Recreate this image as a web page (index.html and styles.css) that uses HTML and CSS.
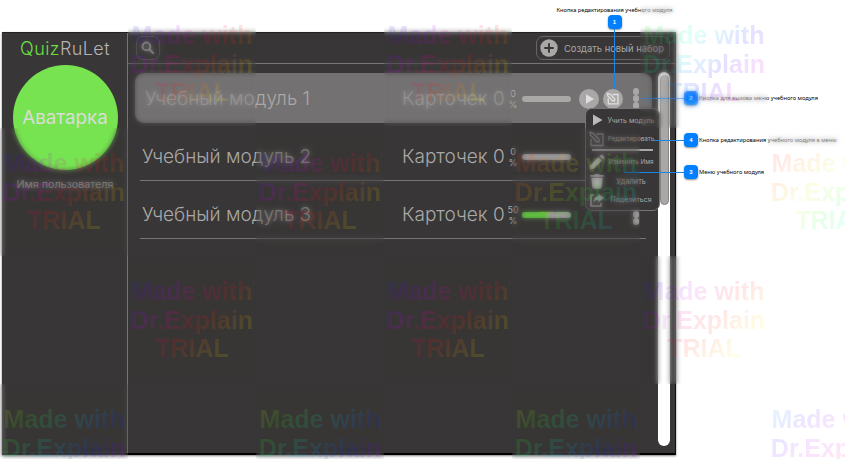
FILE: index.html
```
<!DOCTYPE html>
<html lang="ru">
<head>
<meta charset="utf-8">
<title>QuizRuLet</title>
<link rel="stylesheet" href="styles.css">
</head>
<body>
<div class="app">
  <aside class="sidebar">
    <div class="logo"><span class="green">Quiz</span>RuLet</div>
    <div class="avatar">Аватарка</div>
    <div class="username">Имя пользователя</div>
  </aside>
  <main class="main">
    <header class="header">
      <div class="search"><svg width="14" height="14" viewBox="0 0 14 14" fill="none" stroke="#aaa8a7" stroke-width="2"><circle cx="5.4" cy="5.4" r="3.9"/><path d="M8.3 8.3 12.8 12.8"/></svg></div>
      <div class="create"><svg width="18" height="18" viewBox="0 0 18 18"><circle cx="9" cy="9" r="8.7" fill="#aaa8a7"/><path d="M9 5v8M5 9h8" stroke="#383636" stroke-width="1.9" stroke-linecap="round"/></svg><span>Создать новый набор</span></div>
    </header>
    <div class="content">
      <div class="list">
        <section class="row active">
          <div class="title">Учебный модуль 1</div><div class="cards">Карточек 0</div>
          <div class="pct">0<br>%</div><div class="bar"></div>
          <div class="actions">
            <svg width="20" height="20" viewBox="0 0 20 20"><circle cx="10" cy="10" r="10" fill="#aaa8a7"/><path d="M7 5.2v9.6l8-4.8z" fill="#e0dfdf"/></svg>
            <svg width="20" height="20" viewBox="0 0 20 20"><circle cx="10" cy="10" r="10" fill="#aaa8a7"/><g fill="none" stroke="#e0dfdf" stroke-width="1.3"><path d="M9.5 5.5H15v9.3H5.3V9.5"/><path d="m4.3 4.3 2.8.7 4.6 5-.2 2-2-.2-4.6-4.8z"/></g></svg>
          </div>
          <div class="dots"><i></i><i></i><i></i></div>
        </section>
        <section class="row">
          <div class="title">Учебный модуль 2</div><div class="cards">Карточек 0</div>
          <div class="pct">0<br>%</div><div class="bar"></div>
          <div class="actions"></div><div class="dots"><i></i><i></i><i></i></div>
        </section>
        <section class="row">
          <div class="title">Учебный модуль 3</div><div class="cards">Карточек 0</div>
          <div class="pct">50<br>%</div><div class="bar"><b style="width:50%"></b></div>
          <div class="actions"></div><div class="dots"><i></i><i></i><i></i></div>
        </section>
      </div>
      <div class="track"><div class="thumb"></div></div>
    </div>
  </main>
</div>

<nav class="menu">
  <div class="item learn"><svg width="16" height="16" viewBox="0 0 16 16"><path d="M4 2.5v11l9.5-5.5z" fill="#bbb9b9"/></svg><span>Учить модуль</span></div>
  <div class="item edit"><svg width="16" height="16" viewBox="0 0 16 16" fill="none" stroke="#8e8c8b" stroke-width="1.3"><path d="M7.5 3H14v11.5H2V8"/><path d="m1 1.2 3 .8 6 6.2v2.6H7.6L1.5 4.3z"/></svg><span>Редактировать</span></div>
  <hr>
  <div class="item rename"><svg width="16" height="16" viewBox="0 0 16 16" fill="#aaa8a7"><path d="M1 15v-3.6L9.5 3 13 6.4 4.5 15zM10.3 2.2 12 .7q.8-.6 1.5 0l1.8 1.8q.7.8 0 1.5l-1.5 1.6z"/></svg><span>Изменить Имя</span></div>
  <div class="item remove"><svg width="16" height="16" viewBox="0 0 16 16" fill="#aaa8a7"><path d="M1.2 2h4l1-1h3.6l1 1h4v1.8H1.2zM2.2 4.7h11.6l-1.2 9.6q-.2 1.4-1.4 1.4H4.8q-1.2 0-1.4-1.4z"/></svg><span>Удалить</span></div>
  <div class="item share"><svg width="16" height="16" viewBox="0 0 16 16"><path d="M5 3H2v11h10v-3" fill="none" stroke="#aaa8a7" stroke-width="1.6"/><path d="M9.5 1.8 15 6l-5.5 4.2V7.8Q6 7.7 4.4 11 4.5 4.7 9.5 4.3z" fill="#aaa8a7"/></svg><span>Поделиться</span></div>
</nav>

<div class="callout c1"><span class="label">Кнопка редактирования учебного модуля</span><span class="badge">1</span><span class="stem"></span></div>
<div class="callout side c2"><span class="stem"></span><span class="badge">2</span><span class="label">Кнопка для вызова меню учебного модуля</span></div>
<div class="callout side c4"><span class="stem"></span><span class="badge">4</span><span class="label">Кнопка редактирования учебного модуля в меню</span></div>
<div class="callout side c3"><span class="stem"></span><span class="badge">3</span><span class="label">Меню учебного модуля</span></div>

<div class="marks">
  <div></div><div class="mark blue"><p>Made with<br>Dr.Explain<br>TRIAL</p></div><div></div><div class="mark blue"><p>Made with<br>Dr.Explain<br>TRIAL</p></div><div></div><div class="mark lime"><p>Made with<br>Dr.Explain<br>TRIAL</p></div><div></div>
  <div class="mark blue"><p>Made with<br>Dr.Explain<br>TRIAL</p></div><div></div><div class="mark blue"><p>Made with<br>Dr.Explain<br>TRIAL</p></div><div></div><div class="mark red"><p>Made with<br>Dr.Explain<br>TRIAL</p></div><div></div><div class="mark red pale"><p>Made with<br>Dr.Explain<br>TRIAL</p></div>
  <div></div><div class="mark blue"><p>Made with<br>Dr.Explain<br>TRIAL</p></div><div></div><div class="mark blue"><p>Made with<br>Dr.Explain<br>TRIAL</p></div><div></div><div class="mark blue pale"><p>Made with<br>Dr.Explain<br>TRIAL</p></div><div></div>
  <div class="mark olive"><p>Made with<br>Dr.Explain<br>TRIAL</p></div><div></div><div class="mark olive"><p>Made with<br>Dr.Explain<br>TRIAL</p></div><div></div><div class="mark olive"><p>Made with<br>Dr.Explain<br>TRIAL</p></div><div></div><div class="mark azure pale"><p>Made with<br>Dr.Explain<br>TRIAL</p></div>
</div>
</body>
</html>
```
FILE: styles.css
```
* { box-sizing: border-box; }
html { overflow: hidden; }
body { margin: 0; width: 845px; height: 459px; overflow: hidden; position: relative; background: #fff; font-family: Inter, "Noto Sans", sans-serif; color: #aaa8a7; }
.app { display: flex; width: 674px; height: 423px; margin: 32px 0 0 2px; background: #383636; border-right: 1px solid #111; border-bottom: 2px solid #000; border-top: 1px solid #222; box-shadow: 0 1px 2px rgba(0,0,0,.5); }
.sidebar { width: 126px; padding-left: 1px; border-right: 1px solid #777575; display: flex; flex-direction: column; align-items: center; }
.logo { font-size: 18px; font-weight: 300; line-height: 24px; margin-top: 4px; letter-spacing: .4px; color: #b5b3b2; }
.green { color: #69e044; }
.avatar { width: 105px; height: 105px; border-radius: 50%; margin-top: 4px; background: #77e350; color: #d9dcd7; display: flex; align-items: center; justify-content: center; font-size: 18.8px; white-space: nowrap; }
.username { margin-top: 8px; font-size: 10.7px; line-height: 14px; white-space: nowrap; }
.main { flex: 1; display: flex; flex-direction: column; min-width: 0; }
.header { height: 32px; border-bottom: 1px solid #777575; display: flex; justify-content: space-between; align-items: center; padding: 0 5px 0 8px; }
.search { width: 24px; height: 24px; border: 1px solid #686665; border-radius: 7px; display: flex; align-items: center; justify-content: center; }
.create { width: 134px; height: 24px; border: 1px solid #686665; border-radius: 7px; display: flex; align-items: center; padding-left: 3px; gap: 6px; font-size: 9.4px; white-space: nowrap; }
.create svg { flex: none; }
.content { flex: 1; display: flex; padding: 8px 5px 7px 7px; }
.list { width: 517px; padding-top: 1px; display: flex; flex-direction: column; }
.row { height: 58px; margin: 0 6px 0 5px; padding: 10px 0 0 2px; display: flex; align-items: center; border-bottom: 1px solid #777575; }
.row.active { height: 50px; margin: 0; padding: 1px 0 0 10px; border: 0; border-radius: 9px; background: #737171; }
.title { width: 260px; font-size: 19px; font-weight: 300; white-space: nowrap; }
.row.active .title { width: 257px; }
.cards { width: 105px; font-size: 19px; font-weight: 300; white-space: nowrap; }
.pct { width: 12px; margin-right: 3px; text-align: center; font-size: 9px; line-height: 11px; display: flex; justify-content: center; }
.bar { width: 49px; height: 6px; border-radius: 3px; background: #aaa8a7; overflow: hidden; }
.bar b { display: block; height: 100%; background: #66d443; }
.actions { display: flex; width: 52px; padding-left: 8px; gap: 4px; margin-right: 10px; }
.dots { display: flex; flex-direction: column; gap: .6px; }
.dots i { width: 6.4px; height: 6.4px; border-radius: 50%; background: #aaa8a7; }
.track { width: 12px; height: 374px; margin-left: auto; padding: 3px 1.5px; border-radius: 6px; background: #fff; }
.thumb { height: 130px; border-radius: 5px; background: #aaa8a7; border: 1px solid #858382; }
.menu { position: absolute; left: 585px; top: 108px; width: 75px; height: 103px; border: 1px solid #777575; border-radius: 7px; background: #383636; padding: 2px 0 0 3px; }
.item { height: 18.6px; display: grid; grid-template-columns: 17px 50px; align-items: center; font-size: 7px; white-space: nowrap; text-align: center; }
.item.edit, .item.rename { font-size: 6.3px; }
.item.remove { font-size: 7.4px; }
.menu hr { width: 61px; height: 2px; margin: 1px 0 2px 3px; border: 0; background: #aaa8a7; }
.callout { position: absolute; color: #000; display: flex; align-items: center; white-space: nowrap; }
.label { font-family: "Noto Sans", sans-serif; font-size: 5.7px; }
.badge { flex: none; width: 14px; height: 14px; border-radius: 4px; background: #0080ff; color: #fff; font: bold 6px/14px "Liberation Sans", sans-serif; text-align: center; box-shadow: 0 1px 2px rgba(0,0,0,.45); }
.stem { flex: 1; background: #1a84e8; }
.c1 { left: 550px; top: 5px; width: 129px; height: 84px; flex-direction: column; }
.c1 .label { line-height: 10px; }
.c1 .stem { width: 1px; }
.side { height: 14px; }
.side .stem { height: 1px; }
.side .label { width: 146px; padding-left: 1px; }
.c2 { left: 642px; top: 91px; width: 202px; }
.c4 { left: 654px; top: 133px; width: 190px; }
.c3 { left: 624px; top: 165px; width: 220px; }
.marks { position: absolute; inset: 0; overflow: hidden; display: grid; grid-template-columns: repeat(7, 128px); grid-auto-rows: 128px; }
.mark { position: relative; }
.mark::before { content: ""; position: absolute; inset: 0; backdrop-filter: blur(2.4px); opacity: .6; }
.mark p { position: relative; margin: 0; height: 128px; padding-top: 21px; text-align: center; font: bold 25px/28.5px "Liberation Sans", sans-serif; color: transparent; background-clip: text; -webkit-background-clip: text; opacity: .12; }
.mark.pale p { opacity: .1; }
.blue p { background-image: linear-gradient(135deg, #04f 10%, #50f 20%, #c0f 33%, #f06 45%, #f20 55%, #f90 66%, #ef0 77%, #3f0 90%); }
.lime p { background-image: linear-gradient(135deg, #6f0 5%, #0f3 20%, #0fc 35%, #08f 47%, #20f 58%, #b0f 70%, #f0a 84%); }
.red p { background-image: linear-gradient(135deg, #f00 10%, #f80 28%, #cf0 42%, #0f2 58%, #0fc 72%, #04f 90%); }
.olive p { background-image: linear-gradient(135deg, #df0 10%, #4f0 22%, #0f8 35%, #0af 48%, #02f 62%, #a0f 75%, #f08 90%); }
.azure p { background-image: linear-gradient(135deg, #0af 10%, #22f 25%, #a0f 38%, #f0a 55%, #f30 70%); }
```
